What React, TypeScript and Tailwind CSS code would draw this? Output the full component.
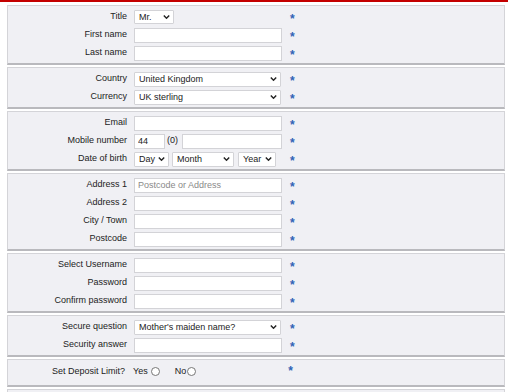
import React from "react";

const font = { fontFamily: '"Liberation Sans", Arial, sans-serif' };

const Chevron: React.FC = () => (
  <svg
    className="pointer-events-none absolute right-[4px] top-1/2 -translate-y-1/2"
    width="7"
    height="5"
    viewBox="0 0 7 5"
  >
    <path d="M0.8 1 L3.5 3.8 L6.2 1" fill="none" stroke="#222" strokeWidth="1.4" />
  </svg>
);

const Select: React.FC<{ value: string; w: string; h?: string }> = ({ value, w, h = "h-[15px]" }) => (
  <div className={`relative ${w} ${h}`}>
    <select
      defaultValue={value}
      className="block appearance-none w-full h-full bg-white border border-[#d3d3d7] rounded-[1px] pl-[4px] py-0 text-[9px] leading-none text-[#222] outline-none"
      style={font}
    >
      <option>{value}</option>
    </select>
    <Chevron />
  </div>
);

const Input: React.FC<{ w?: string; placeholder?: string; value?: string }> = ({
  w = "w-[148px]",
  placeholder,
  value,
}) => (
  <input
    defaultValue={value}
    placeholder={placeholder}
    className={`block ${w} h-[15px] bg-white border border-[#d3d3d7] pl-[3px] text-[9px] text-[#222] placeholder:text-[#8a8a8a] outline-none`}
    style={font}
  />
);

const Star: React.FC = () => (
  <span className="text-[12px] font-bold leading-none text-[#2f63b6] translate-y-[2px]">*</span>
);

const Row: React.FC<{ label: string; children: React.ReactNode }> = ({ label, children }) => (
  <div className="flex items-center h-[18px]">
    <div className="w-[119px] text-right text-[9px] text-[#222]">{label}</div>
    <div className="ml-[7px] w-[156px] flex items-center">{children}</div>
    <Star />
  </div>
);

const Box: React.FC<{ children: React.ReactNode; extra?: string }> = ({ children, extra = "" }) => (
  <div
    className={`ml-[7px] mr-[3px] bg-[#f0f0f4] border border-[#d4d4d8] border-b-2 border-b-[#b9b9bd] pt-[2px] pb-[1px] ${extra}`}
  >
    {children}
  </div>
);

export default function App() {
  return (
    <div className="w-[508px] h-[392px] overflow-hidden bg-white" style={font}>
      <div className="h-[2px] bg-[#c40000]" />
      <div className="mt-[3px] flex flex-col gap-[2px]">
        <Box>
          <Row label="Title">
            <Select value="Mr." w="w-[40px]" h="h-[14px]" />
          </Row>
          <Row label="First name">
            <Input />
          </Row>
          <Row label="Last name">
            <Input />
          </Row>
        </Box>
        <Box>
          <Row label="Country">
            <Select value="United Kingdom" w="w-[147px]" />
          </Row>
          <Row label="Currency">
            <Select value="UK sterling" w="w-[147px]" />
          </Row>
        </Box>
        <Box>
          <Row label="Email">
            <Input />
          </Row>
          <Row label="Mobile number">
            <Input w="w-[31px]" value="44" />
            <span className="ml-[2px] w-[15px] text-[9px] text-[#222]">(0)</span>
            <Input w="w-[100px]" />
          </Row>
          <Row label="Date of birth">
            <Select value="Day" w="w-[35px]" />
            <div className="ml-[3px]">
              <Select value="Month" w="w-[62px]" />
            </div>
            <div className="ml-[4px]">
              <Select value="Year" w="w-[38px]" />
            </div>
          </Row>
        </Box>
        <Box>
          <Row label="Address 1">
            <Input placeholder="Postcode or Address" />
          </Row>
          <Row label="Address 2">
            <Input />
          </Row>
          <Row label="City / Town">
            <Input />
          </Row>
          <Row label="Postcode">
            <Input />
          </Row>
        </Box>
        <Box>
          <Row label="Select Username">
            <Input />
          </Row>
          <Row label="Password">
            <Input />
          </Row>
          <Row label="Confirm password">
            <Input />
          </Row>
        </Box>
        <Box>
          <Row label="Secure question">
            <Select value="Mother's maiden name?" w="w-[147px]" />
          </Row>
          <Row label="Security answer">
            <Input />
          </Row>
        </Box>
        <Box extra="pt-[3px] pb-[4px]">
          <div className="flex items-center h-[18px] text-[9px] text-[#222]">
            <div className="w-[117px] text-right">Set Deposit Limit?</div>
            <span className="ml-[8px]">Yes</span>
            <span className="ml-[3px] w-[9px] h-[9px] -translate-y-[1px] rounded-full border border-[#777] bg-white" />
            <span className="ml-[15px]">No</span>
            <span className="ml-[1px] w-[9px] h-[9px] -translate-y-[1px] rounded-full border border-[#777] bg-white" />
            <div className="ml-[92px]">
              <Star />
            </div>
          </div>
        </Box>
        <Box extra="h-[20px]">
          <div />
        </Box>
      </div>
    </div>
  );
}
